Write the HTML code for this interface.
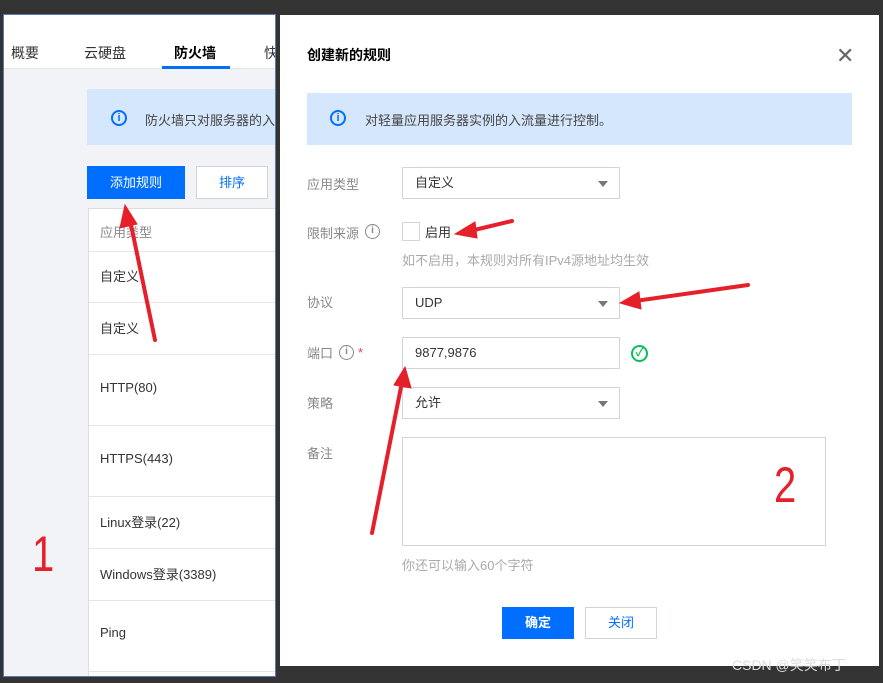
<!DOCTYPE html>
<html><head><meta charset="utf-8"><style>
*{margin:0;padding:0;box-sizing:border-box}
body{width:883px;height:683px;background:#333;position:relative;overflow:hidden;font-family:"Liberation Sans","Noto Sans CJK SC",sans-serif;font-size:13px;color:#333}
.a{position:absolute}
.left{left:3px;top:14px;width:273px;height:663px;background:#f2f3f6;border:1px solid #5a7ab0;overflow:hidden}
.tabs{left:0;top:0;width:273px;height:54px;background:#fff;border-bottom:1px solid #e5e5e5}
.tab{top:28px;font-size:14px;color:#333}
.dlg{left:280px;top:15px;width:599px;height:651px;background:#fff}
.info{background:#d5e7fd}
.ic{width:16px;height:16px;border:2px solid #006eff;border-radius:50%;color:#006eff;font-size:11px;font-weight:bold;text-align:center;line-height:12px}
.sel{border:1px solid #cfd5de;background:#fff;height:32px;width:218px;padding-left:12px;line-height:30px;font-size:13px}
.sel:after{content:"";position:absolute;right:11px;top:13px;border:5px solid transparent;border-top:6px solid #777}
.lbl{color:#888;font-size:13px}
.row{left:0;width:188px;height:1px;background:#e5e5e5}
.cell{left:11px;font-size:13px;color:#333}
.num{color:#e5202a;font-size:50px;line-height:50px;font-family:"Liberation Sans",sans-serif;font-weight:normal;transform:scaleX(0.8);transform-origin:left top}
</style></head><body>
<div class="a left">
 <div class="a tabs">
  <div class="a tab" style="left:7px">概要</div>
  <div class="a tab" style="left:80px">云硬盘</div>
  <div class="a tab" style="left:170px;font-weight:bold;color:#000">防火墙</div>
  <div class="a tab" style="left:260px">快</div>
  <div class="a" style="left:158px;top:51px;width:68px;height:3px;background:#006eff"></div>
 </div>
 <div class="a info" style="left:83px;top:74px;width:200px;height:56px"></div>
 <div class="a ic" style="left:107px;top:95px">i</div>
 <div class="a" style="left:141px;top:95px;color:#444;white-space:nowrap">防火墙只对服务器的入</div>
 <div class="a" style="left:83px;top:151px;width:98px;height:33px;background:#006eff;color:#fff;text-align:center;line-height:33px">添加规则</div>
 <div class="a" style="left:192px;top:151px;width:72px;height:33px;background:#fff;border:1px solid #cfd5de;color:#006eff;text-align:center;line-height:31px">排序</div>
 <div class="a" style="left:84px;top:193px;width:200px;height:480px;background:#fff;border:1px solid #ddd">
  <div class="a cell" style="top:13px;color:#888">应用类型</div>
  <div class="a row" style="top:42px"></div>
  <div class="a cell" style="top:57px">自定义</div>
  <div class="a row" style="top:93px"></div>
  <div class="a cell" style="top:109px">自定义</div>
  <div class="a row" style="top:145px"></div>
  <div class="a cell" style="top:171px">HTTP(80)</div>
  <div class="a row" style="top:216px"></div>
  <div class="a cell" style="top:242px">HTTPS(443)</div>
  <div class="a row" style="top:287px"></div>
  <div class="a cell" style="top:303px">Linux登录(22)</div>
  <div class="a row" style="top:339px"></div>
  <div class="a cell" style="top:355px">Windows登录(3389)</div>
  <div class="a row" style="top:391px"></div>
  <div class="a cell" style="top:416px">Ping</div>
  <div class="a row" style="top:462px"></div>
 </div>
</div>
<div class="a dlg">
 <div class="a" style="left:27px;top:30px;font-size:14px;font-weight:bold;color:#000">创建新的规则</div>
 <div class="a" style="left:556px;top:28px;font-size:22px;color:#666">✕</div>
 <div class="a info" style="left:27px;top:78px;width:545px;height:52px"></div>
 <div class="a ic" style="left:50px;top:95px">i</div>
 <div class="a" style="left:85px;top:95px;color:#444">对轻量应用服务器实例的入流量进行控制。</div>
 <div class="a lbl" style="left:27px;top:159px">应用类型</div>
 <div class="a sel" style="left:122px;top:152px">自定义</div>
 <div class="a lbl" style="left:27px;top:208px">限制来源</div>
 <div class="a" style="left:85px;top:209px;width:15px;height:15px;border:1.5px solid #888;border-radius:50%;font-size:10px;text-align:center;line-height:12px;color:#888;font-weight:bold">i</div>
 <div class="a" style="left:122px;top:207px;width:18px;height:19px;border:1px solid #cfd5de"></div>
 <div class="a" style="left:145px;top:207px">启用</div>
 <div class="a" style="left:122px;top:235px;color:#aaa">如不启用，本规则对所有IPv4源地址均生效</div>
 <div class="a lbl" style="left:27px;top:277px">协议</div>
 <div class="a sel" style="left:122px;top:272px">UDP</div>
 <div class="a lbl" style="left:27px;top:328px">端口</div>
 <div class="a" style="left:59px;top:330px;width:15px;height:15px;border:1.5px solid #888;border-radius:50%;font-size:10px;text-align:center;line-height:12px;color:#888;font-weight:bold">i</div>
 <div class="a" style="left:78px;top:330px;color:#e54545">*</div>
 <div class="a" style="left:122px;top:322px;width:218px;height:32px;background:#fff;border:1px solid #cfd5de;padding-left:12px;line-height:30px">9877,9876</div>
 <div class="a" style="left:351px;top:330px;width:17px;height:17px;border:2px solid #0abf5b;border-radius:50%;color:#0abf5b;font-size:11px;text-align:center;line-height:13px;font-weight:bold">✓</div>
 <div class="a lbl" style="left:27px;top:378px">策略</div>
 <div class="a sel" style="left:122px;top:372px">允许</div>
 <div class="a lbl" style="left:27px;top:428px">备注</div>
 <div class="a" style="left:122px;top:422px;width:424px;height:109px;border:1px solid #cfd5de"></div>
 <div class="a" style="left:122px;top:540px;color:#aaa">你还可以输入60个字符</div>
 <div class="a" style="left:222px;top:592px;width:72px;height:32px;background:#006eff;color:#fff;font-weight:bold;text-align:center;line-height:32px">确定</div>
 <div class="a" style="left:305px;top:592px;width:72px;height:32px;border:1px solid #cfd5de;color:#006eff;text-align:center;line-height:30px">关闭</div>
</div>
<div class="a" style="left:732px;top:655px;color:#ddd;font-size:14px">CSDN @笑笑布丁</div>
<div class="a num" style="left:32px;top:529px">1</div>
<div class="a num" style="left:774px;top:460px">2</div>
<svg class="a" style="left:0;top:0" width="883" height="683">
 <g stroke="#e5202a" stroke-width="4" fill="#e5202a" stroke-linecap="round">
  <line x1="155" y1="340" x2="130" y2="220"/><polygon points="125,205 120,228 137,224" stroke-width="1"/>
  <line x1="512" y1="221" x2="470" y2="231"/><polygon points="455,234 475,222 477,238" stroke-width="1"/>
  <line x1="748" y1="285" x2="635" y2="301"/><polygon points="620,303 639,292 641,309" stroke-width="1"/>
  <line x1="372" y1="533" x2="402" y2="382"/><polygon points="405,367 394,385 411,388" stroke-width="1"/>
 </g>
</svg>
</body></html>
